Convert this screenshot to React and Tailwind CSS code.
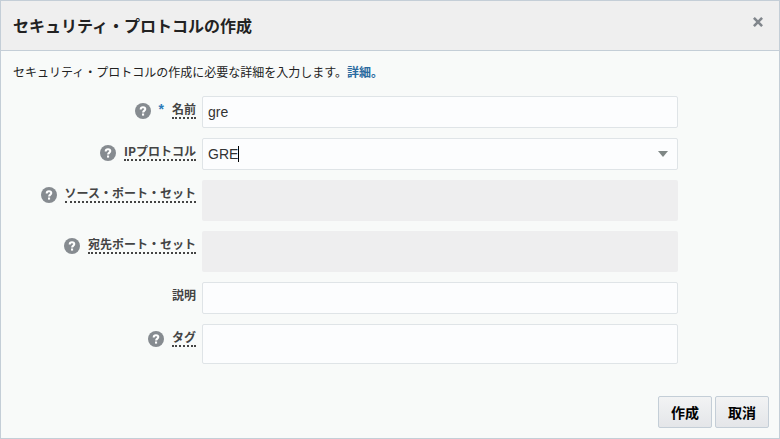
import { useState } from 'react';

const fieldClass =
  'block w-full rounded-xs border border-[#dfe4e7] bg-[#fcfdfe] px-[5px] text-sm text-[#333333] outline-none';

function App() {
  const [name, setName] = useState('gre');
  const [protocol, setProtocol] = useState('GRE');
  const [description, setDescription] = useState('');
  const [tags, setTags] = useState('');

  return (
    <div
      role="dialog"
      aria-labelledby="dialog-title"
      className="min-h-screen flex flex-col border border-[#c4ced7] bg-[#f8faf9] font-['Liberation_Sans','Noto_Sans_CJK_JP',sans-serif] text-[#333333]"
    >
      {/* Header */}
      <header className="flex items-start justify-between border-b border-[#c4ced7] bg-[#efefef] pl-3 pr-4 py-3">
        <h1 id="dialog-title" className="text-base leading-[25px] font-bold text-[#222222] font-['Noto_Sans_CJK_JP',sans-serif]">
          セキュリティ・プロトコルの作成
        </h1>
        <button type="button" aria-label="閉じる" className="mt-1 text-[#81868c]">
          <svg viewBox="0 0 10 10" className="block w-[10px] h-[10px]" fill="none" stroke="currentColor" strokeWidth="2.6">
            <path d="M0.9 0.9 L9.1 9.1 M9.1 0.9 L0.9 9.1" />
          </svg>
        </button>
      </header>

      <form className="flex-1 flex flex-col" onSubmit={(e) => e.preventDefault()}>
        <p className="px-3 pt-[11px] pb-[14px] text-xs leading-5 text-[#222222] font-['Noto_Sans_CJK_JP',sans-serif]">
          セキュリティ・プロトコルの作成に必要な詳細を入力します。
          <a href="#details" className="font-bold text-[#2a6a9f]">詳細。</a>
        </p>

        {/* Fields */}
        <div className="flex flex-col gap-[10px] pl-3 pr-[101px]">
          <Row id="name" label="名前" help required>
            <input
              id="name"
              type="text"
              required
              value={name}
              onChange={(e) => setName(e.target.value)}
              className={`${fieldClass} h-8`}
            />
          </Row>

          <Row id="protocol" label="IPプロトコル" help>
            <div className={`${fieldClass} flex items-center h-8`}>
              <input
                id="protocol"
                type="text"
                role="combobox"
                aria-expanded="false"
                value={protocol}
                onChange={(e) => setProtocol(e.target.value)}
                className="field-sizing-content bg-transparent outline-none"
              />
              <span className="w-px h-4 bg-black" />
              <button type="button" aria-label="プロトコルを選択" className="ml-auto mr-1 text-[#7f8785]">
                <svg viewBox="0 0 10 6" className="block w-[10px] h-[6px]" fill="currentColor">
                  <path d="M0 0 H10 L5 6 Z" />
                </svg>
              </button>
            </div>
          </Row>

          <Row id="source-ports" label="ソース・ポート・セット" help>
            <input id="source-ports" type="text" disabled className="block w-full h-[41px] rounded-xs bg-[#eeeeef]" />
          </Row>

          <Row id="target-ports" label="宛先ポート・セット" help>
            <input id="target-ports" type="text" disabled className="block w-full h-[41px] rounded-xs bg-[#eeeeef]" />
          </Row>

          <Row id="description" label="説明">
            <input
              id="description"
              type="text"
              value={description}
              onChange={(e) => setDescription(e.target.value)}
              className={`${fieldClass} h-8`}
            />
          </Row>

          <Row id="tags" label="タグ" help>
            <input
              id="tags"
              type="text"
              value={tags}
              onChange={(e) => setTags(e.target.value)}
              className={`${fieldClass} h-10`}
            />
          </Row>
        </div>

        {/* Actions */}
        <footer className="mt-auto flex justify-end gap-[3px] px-[10px] pt-4 pb-[10px]">
          <ActionButton type="submit">作成</ActionButton>
          <ActionButton type="button">取消</ActionButton>
        </footer>
      </form>
    </div>
  );
}

function Row({ id, label, help, required, children }) {
  return (
    <div className="grid grid-cols-[183px_minmax(0,1fr)] gap-[6px]">
      <div className="flex items-start justify-end gap-2">
        {help && <HelpButton label={label} />}
        {required && (
          <span className="mt-[5px] text-sm leading-4 font-bold text-[#2a7ab8]" aria-hidden="true">*</span>
        )}
        <label
          htmlFor={id}
          className={`mt-[5px] text-xs leading-4 font-bold text-[#444444] font-['Noto_Sans_CJK_JP',sans-serif] ${
            help ? 'border-b-2 border-dotted border-[#444444]' : ''
          }`}
        >
          {label}
        </label>
      </div>
      {children}
    </div>
  );
}

function HelpButton({ label }) {
  return (
    <button type="button" aria-label={`${label}のヘルプ`} className="mt-[7px]">
      <svg viewBox="0 0 16 16" className="block w-4 h-4">
        <circle cx="8" cy="8" r="8" fill="#868b90" />
        <path
          d="M5.7 6.4 C5.7 4.9 6.7 4.2 8 4.2 C9.4 4.2 10.3 4.9 10.3 6.1 C10.3 7.6 8.1 7.7 8.1 9.6"
          fill="none"
          stroke="#ffffff"
          strokeWidth="2"
        />
        <rect x="7" y="10.5" width="2.1" height="2.1" fill="#ffffff" />
      </svg>
    </button>
  );
}

function ActionButton({ type, children }) {
  return (
    <button
      type={type}
      className="h-8 px-3 rounded-xs border border-[#c4ced7] bg-linear-to-b from-[#f2f3f4] to-[#e4e6e9] text-sm font-bold text-black font-['Noto_Sans_CJK_JP',sans-serif]"
    >
      {children}
    </button>
  );
}

export default App;
